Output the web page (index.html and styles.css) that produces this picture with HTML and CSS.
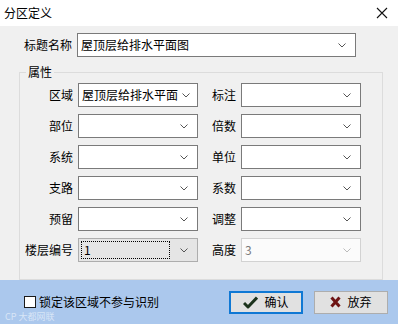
FILE: index.html
```html
<!DOCTYPE html>
<html lang="zh">
<head>
<meta charset="utf-8">
<title>分区定义</title>
<link rel="stylesheet" href="styles.css">
</head>
<body>
<div class="dialog">
  <div class="titlebar">
    <span class="title">分区定义</span>
    <svg class="close" width="12" height="12" viewBox="0 0 12 12"><path d="M1 1 L11 11 M11 1 L1 11" stroke="#111" stroke-width="1.1" fill="none"/></svg>
  </div>
  <div class="content">
    <div class="title-row">
      <span class="lbl lbl-title">标题名称</span>
      <div class="combo combo-wide"><span class="val">屋顶层给排水平面图</span><svg class="chev" width="8" height="5" viewBox="0 0 8 5"><path d="M0.5 0.5 L4 4 L7.5 0.5" stroke="#555" fill="none"/></svg></div>
    </div>
    <fieldset class="group">
      <legend>属性</legend>
      <div class="grid">
        <span class="lbl">区域</span>
        <div class="combo"><span class="val">屋顶层给排水平面</span><svg class="chev" width="8" height="5" viewBox="0 0 8 5"><path d="M0.5 0.5 L4 4 L7.5 0.5" stroke="#555" fill="none"/></svg></div>
        <span class="lbl">标注</span>
        <div class="combo"><span class="val"></span><svg class="chev" width="8" height="5" viewBox="0 0 8 5"><path d="M0.5 0.5 L4 4 L7.5 0.5" stroke="#555" fill="none"/></svg></div>

        <span class="lbl">部位</span>
        <div class="combo"><span class="val"></span><svg class="chev" width="8" height="5" viewBox="0 0 8 5"><path d="M0.5 0.5 L4 4 L7.5 0.5" stroke="#555" fill="none"/></svg></div>
        <span class="lbl">倍数</span>
        <div class="combo"><span class="val"></span><svg class="chev" width="8" height="5" viewBox="0 0 8 5"><path d="M0.5 0.5 L4 4 L7.5 0.5" stroke="#555" fill="none"/></svg></div>

        <span class="lbl">系统</span>
        <div class="combo"><span class="val"></span><svg class="chev" width="8" height="5" viewBox="0 0 8 5"><path d="M0.5 0.5 L4 4 L7.5 0.5" stroke="#555" fill="none"/></svg></div>
        <span class="lbl">单位</span>
        <div class="combo"><span class="val"></span><svg class="chev" width="8" height="5" viewBox="0 0 8 5"><path d="M0.5 0.5 L4 4 L7.5 0.5" stroke="#555" fill="none"/></svg></div>

        <span class="lbl">支路</span>
        <div class="combo"><span class="val"></span><svg class="chev" width="8" height="5" viewBox="0 0 8 5"><path d="M0.5 0.5 L4 4 L7.5 0.5" stroke="#555" fill="none"/></svg></div>
        <span class="lbl">系数</span>
        <div class="combo"><span class="val"></span><svg class="chev" width="8" height="5" viewBox="0 0 8 5"><path d="M0.5 0.5 L4 4 L7.5 0.5" stroke="#555" fill="none"/></svg></div>

        <span class="lbl">预留</span>
        <div class="combo"><span class="val"></span><svg class="chev" width="8" height="5" viewBox="0 0 8 5"><path d="M0.5 0.5 L4 4 L7.5 0.5" stroke="#555" fill="none"/></svg></div>
        <span class="lbl">调整</span>
        <div class="combo"><span class="val"></span><svg class="chev" width="8" height="5" viewBox="0 0 8 5"><path d="M0.5 0.5 L4 4 L7.5 0.5" stroke="#555" fill="none"/></svg></div>

        <span class="lbl">楼层编号</span>
        <div class="combo combo-focus"><span class="val focus">1</span><svg class="chev" width="8" height="5" viewBox="0 0 8 5"><path d="M0.5 0.5 L4 4 L7.5 0.5" stroke="#555" fill="none"/></svg></div>
        <span class="lbl">高度</span>
        <div class="combo combo-disabled"><span class="val">3</span><svg class="chev" width="8" height="5" viewBox="0 0 8 5"><path d="M0.5 0.5 L4 4 L7.5 0.5" stroke="#bbb" fill="none"/></svg></div>
      </div>
    </fieldset>
  </div>
  <div class="footer">
    <label class="check"><span class="box"></span><span>锁定该区域不参与识别</span></label>
    <div class="buttons">
      <div class="btn btn-default">
        <svg class="ico" width="15" height="13" viewBox="0 0 15 13"><path d="M1 7 L5 11 L14 1.5" stroke="#1c331c" stroke-width="3" fill="none" stroke-linejoin="round"/></svg>
        <span>确认</span>
      </div>
      <div class="btn">
        <svg class="ico" width="11" height="12" viewBox="0 0 11 12"><path d="M1.5 1.5 L9.5 10.5 M9.5 1.5 L1.5 10.5" stroke="#6e1414" stroke-width="3" fill="none"/></svg>
        <span>放弃</span>
      </div>
    </div>
    <span class="watermark">CP 大都网联</span>
  </div>
</div>
</body>
</html>
```

FILE: styles.css
```css
* { box-sizing: border-box; }
html, body { margin: 0; padding: 0; }
body {
  width: 398px;
  height: 324px;
  overflow: hidden;
  font-family: "Noto Sans CJK SC", "Microsoft YaHei", sans-serif;
  font-size: 12px;
  color: #000;
  background: #f0f0f0;
}
.dialog {
  width: 398px;
  height: 324px;
  display: flex;
  flex-direction: column;
}
.titlebar {
  height: 26px;
  background: #fff;
  display: flex;
  align-items: center;
  justify-content: space-between;
  padding: 0 10px 0 4px;
}
.title { font-size: 12px; line-height: 16px; }
.close { display: block; }
.content {
  height: 254px;
  background: #f0f0f0;
  padding-top: 7px;
}
.title-row {
  display: flex;
  align-items: center;
  gap: 5px;
}
.lbl {
  line-height: 16px;
  text-align: right;
  white-space: nowrap;
}
.lbl-title { width: 72px; }
.combo {
  height: 24px;
  background: #fff;
  border: 1px solid #7a7a7a;
  display: flex;
  align-items: center;
  justify-content: space-between;
  padding: 0 9px 0 3px;
}
.combo-wide { width: 279px; }
.val {
  line-height: 18px;
  white-space: nowrap;
}
.chev { display: block; flex: none; margin-left: 4px; }
.group {
  margin: 8px 0 0 19px;
  width: 364px;
  height: 215px;
  border: 1px solid #dcdcdc;
  padding: 4px 0 0 0;
  min-width: 0;
}
.group legend {
  margin-left: 6px;
  padding: 0 2px;
  line-height: 14px;
  font-size: 12px;
}
.grid {
  display: grid;
  grid-template-columns: 53px 120px 33px 120px;
  grid-auto-rows: 24px;
  column-gap: 5px;
  row-gap: 7px;
  align-items: center;
}
.combo-focus {
  background: #e5e5e5;
  border-color: #adadad;
  padding-left: 2px;
}
.val.focus {
  flex: 1;
  margin-right: 6px;
  height: 18px;
  line-height: 16px;
  border: 1px dotted #000;
  padding-left: 2px;
}
.combo-disabled {
  background: #fbfbfb;
  border-color: #d2d2d2;
  color: #7a7a7a;
}
.footer {
  flex: 1;
  background: #abc8ed;
  display: flex;
  align-items: center;
  justify-content: space-between;
  padding: 0 10px 0 24px;
  position: relative;
}
.check {
  display: flex;
  align-items: center;
  gap: 3px;
  line-height: 16px;
}
.box {
  width: 12px;
  height: 12px;
  background: #fff;
  border: 1px solid #1a1a1a;
}
.buttons {
  display: flex;
  gap: 11px;
}
.btn {
  width: 74px;
  height: 23px;
  background: #e1e1e1;
  border: 1px solid #adadad;
  display: flex;
  align-items: center;
  justify-content: center;
  gap: 6px;
  line-height: 16px;
}
.btn-default {
  border: 2px solid #0f78d4;
}
.ico { display: block; }
.watermark {
  position: absolute;
  left: 5px;
  bottom: 2px;
  font-size: 9px;
  line-height: 10px;
  color: rgba(255,255,255,0.55);
}
```
